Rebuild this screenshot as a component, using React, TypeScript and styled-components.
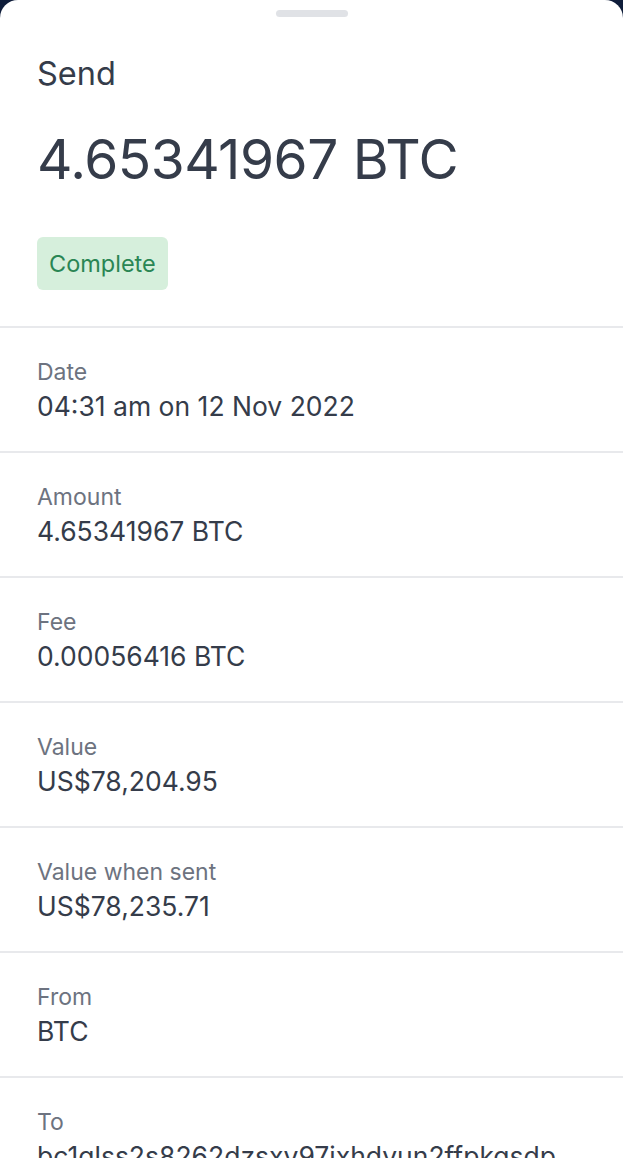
import styled, { createGlobalStyle } from 'styled-components';

const GlobalStyle = createGlobalStyle`
  body {
    margin: 0;
    background: #0f1d3a;
    font-family: Inter, "Noto Sans", sans-serif;
    -webkit-font-smoothing: antialiased;
  }
`;

const Sheet = styled.div`
  background: #ffffff;
  border-radius: 18px 18px 0 0;
  min-height: 100vh;
  color: #353c4a;
`;

const Handle = styled.div`
  width: 72px;
  height: 7px;
  border-radius: 4px;
  background: #e0e2e6;
  margin: 0 auto;
  position: relative;
  top: 10px;
`;

const Header = styled.header`
  padding: 47px 37px 36px;
  display: flex;
  flex-direction: column;
  align-items: flex-start;
`;

const Kind = styled.h2`
  margin: 0;
  font-size: 32.5px;
  font-weight: 400;
  line-height: 1.2;
`;

const Amount = styled.h1`
  margin: 33px 0 0;
  font-size: 55px;
  font-weight: 400;
  letter-spacing: -0.5px;
  line-height: 1.2;
`;

const Badge = styled.span`
  margin-top: 45px;
  padding: 0 12px;
  height: 53px;
  display: inline-flex;
  align-items: center;
  border-radius: 6px;
  background: #d6efdc;
  color: #2a8654;
  font-size: 23.5px;
`;

const Row = styled.div`
  border-top: 2px solid #e8e9ec;
  padding: 29px 37px 0;
  box-sizing: content-box;
  height: 94px;
`;

const Label = styled.div`
  font-size: 23px;
  color: #6d7380;
  line-height: 30px;
`;

const Value = styled.div`
  font-size: 26.5px;
  color: #353c4a;
  line-height: 36px;
  margin-top: 1px;
  white-space: nowrap;
  overflow: hidden;
`;

const rows = [
  { label: 'Date', value: '04:31 am on 12 Nov 2022' },
  { label: 'Amount', value: '4.65341967 BTC' },
  { label: 'Fee', value: '0.00056416 BTC' },
  { label: 'Value', value: 'US$78,204.95' },
  { label: 'Value when sent', value: 'US$78,235.71' },
  { label: 'From', value: 'BTC' },
  { label: 'To', value: 'bc1qlss2s8262dzsxv97jxhdyun2ffpkgsdp' },
];

export default function App() {
  return (
    <>
      <GlobalStyle />
      <Sheet>
        <Handle />
        <Header>
          <Kind>Send</Kind>
          <Amount>4.65341967 BTC</Amount>
          <Badge>Complete</Badge>
        </Header>
        {rows.map((r) => (
          <Row key={r.label}>
            <Label>{r.label}</Label>
            <Value>{r.value}</Value>
          </Row>
        ))}
      </Sheet>
    </>
  );
}
